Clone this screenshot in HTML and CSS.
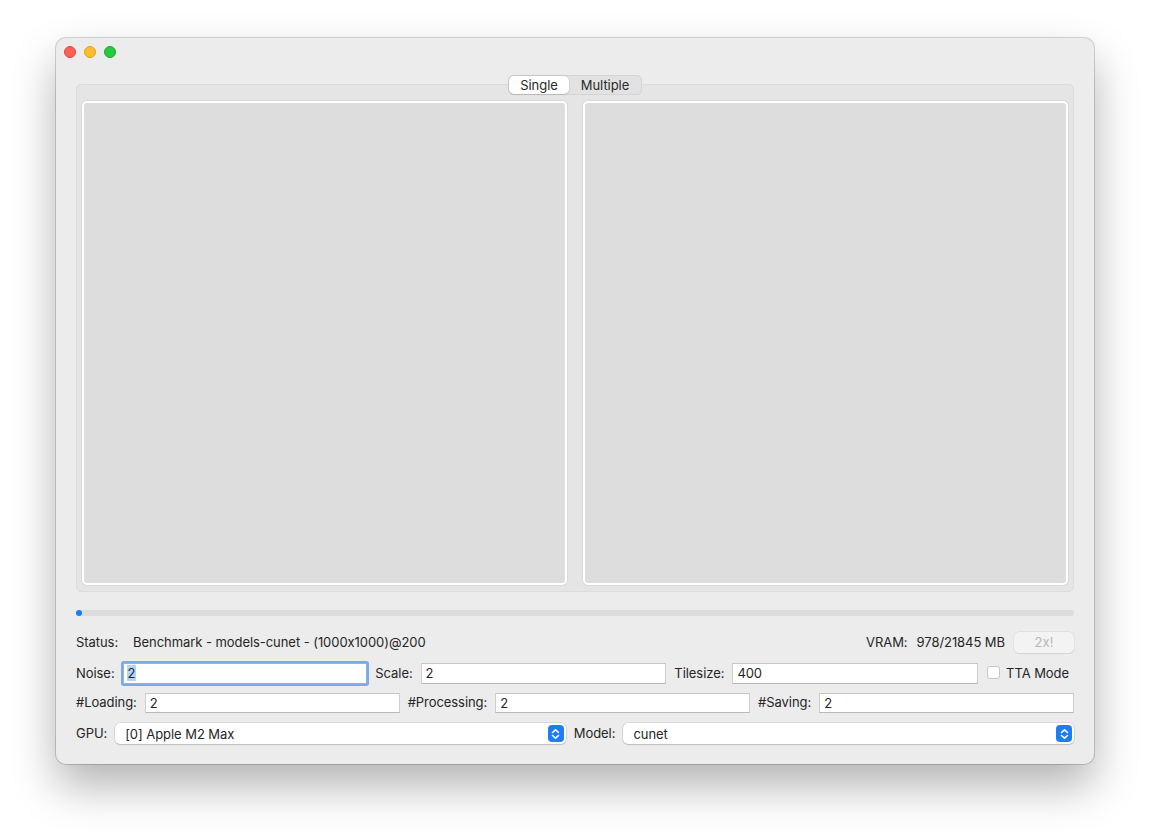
FILE: index.html
```html
<!DOCTYPE html>
<html>
<head>
<meta charset="utf-8">
<link rel="stylesheet" href="styles.css">
</head>
<body>
<div class="desk">
<div class="window">
  <div class="titlebar">
    <span class="light red"></span>
    <span class="light yellow"></span>
    <span class="light green"></span>
  </div>
  <div class="groupbox">
    <div class="tabs">
      <div class="segmented">
        <span class="seg selected">Single</span>
        <span class="seg">Multiple</span>
      </div>
    </div>
    <div class="panels">
      <div class="panel"></div>
      <div class="panel"></div>
    </div>
  </div>
  <div class="progress"><span class="progress-dot"></span></div>
  <div class="row status-row">
    <div class="status-left">
      <span class="label status-label">Status:</span>
      <span class="label">Benchmark - models-cunet - (1000x1000)@200</span>
    </div>
    <div class="status-right">
      <span class="label">VRAM:</span>
      <span class="label">978/21845 MB</span>
      <button class="btn" disabled>2x!</button>
    </div>
  </div>
  <div class="row row2">
    <span class="label">Noise:</span>
    <div class="field focused"><span class="sel-text">2</span></div>
    <span class="label">Scale:</span>
    <div class="field">2</div>
    <span class="label">Tilesize:</span>
    <div class="field">400</div>
    <span class="check"><span class="box"></span><span class="label">TTA Mode</span></span>
  </div>
  <div class="row row3">
    <span class="label">#Loading:</span>
    <div class="field">2</div>
    <span class="label">#Processing:</span>
    <div class="field">2</div>
    <span class="label">#Saving:</span>
    <div class="field">2</div>
  </div>
  <div class="row row4">
    <span class="label">GPU:</span>
    <div class="select"><span>[0] Apple M2 Max</span>
      <span class="stepper"><svg width="9" height="12" viewBox="0 0 9 12"><path d="M1.5 4.5 L4.5 1.8 L7.5 4.5 M1.5 7.5 L4.5 10.2 L7.5 7.5" fill="none" stroke="#fff" stroke-width="1.6" stroke-linecap="round" stroke-linejoin="round"/></svg></span>
    </div>
    <span class="label">Model:</span>
    <div class="select"><span>cunet</span>
      <span class="stepper"><svg width="9" height="12" viewBox="0 0 9 12"><path d="M1.5 4.5 L4.5 1.8 L7.5 4.5 M1.5 7.5 L4.5 10.2 L7.5 7.5" fill="none" stroke="#fff" stroke-width="1.6" stroke-linecap="round" stroke-linejoin="round"/></svg></span>
    </div>
  </div>
</div>
</div>
</body>
</html>
```

FILE: styles.css
```css
html, body {
  margin: 0;
  padding: 0;
  background: #ffffff;
}
body {
  font-family: Inter, "Liberation Sans", sans-serif;
  font-size: 13px;
  letter-spacing: -0.06px;
  font-feature-settings: "calt" 0;
  color: #262626;
}
.desk {
  height: 838px;
  box-sizing: border-box;
  padding: 38px 0 0 56px;
  overflow: hidden;
}
.window {
  width: 1038px;
  height: 726px;
  box-sizing: border-box;
  background: #ececec;
  border-radius: 10px;
  box-shadow: 0 0 0 1px rgba(0,0,0,0.16), 0 22px 45px rgba(0,0,0,0.30);
  padding: 0 20px 20px 20px;
  display: flex;
  flex-direction: column;
}
.titlebar {
  height: 28px;
  display: flex;
  align-items: flex-start;
  gap: 8px;
  padding-top: 8px;
  margin-left: -12px;
  box-sizing: border-box;
}
.light {
  width: 12px;
  height: 12px;
  border-radius: 50%;
  box-sizing: border-box;
}
.red { background: #fe5f57; border: 0.5px solid #e2463f; }
.yellow { background: #febc2e; border: 0.5px solid #e1a116; }
.green { background: #28c840; border: 0.5px solid #1aab29; }
.groupbox {
  margin-top: 18px;
  height: 508px;
  box-sizing: border-box;
  border: 1px solid #dcdcdc;
  border-radius: 5px;
  background: #e5e5e5;
  padding: 0 5px 6px 5px;
  display: flex;
  flex-direction: column;
}
.tabs {
  margin-top: -10px;
  display: flex;
  justify-content: center;
  position: relative;
}
.segmented {
  display: flex;
  height: 20px;
  box-sizing: border-box;
  background: #e2e2e2;
  border: 1px solid #d4d4d4;
  border-radius: 5px;
  width: 134px;
}
.seg {
  display: flex;
  align-items: center;
  justify-content: center;
  height: 18px;
  color: #2a2a2a;
  line-height: 18px;
}
.seg:first-child { width: 60px; }
.seg:last-child { flex: 1; }
.seg.selected {
  background: #ffffff;
  border-radius: 5px;
  box-shadow: 0 0 0 0.5px rgba(0,0,0,0.12), 0 1px 1px rgba(0,0,0,0.08);
}
.panels {
  margin-top: 6px;
  flex: 1;
  display: flex;
  gap: 16px;
}
.panel {
  flex: 1;
  background: #dcdddc;
  border: 2px solid #ffffff;
  border-radius: 5px;
  box-shadow: 0 0 0 1px #dadada;
}
.progress {
  margin-top: 18px;
  height: 6px;
  border-radius: 3px;
  background: #dcdcdc;
  display: flex;
}
.progress-dot {
  width: 6px;
  height: 6px;
  border-radius: 3px;
  background: #1a7cf5;
}
.row {
  display: flex;
  align-items: center;
}
.label {
  white-space: nowrap;
  line-height: 16px;
}
.row2 > .label, .row3 > .label, .row4 > .label, .check .label {
  padding-bottom: 2px;
}
.status-row {
  margin-top: 16px;
  height: 20px;
  justify-content: space-between;
}
.status-left { display: flex; gap: 15px; }
.status-right { display: flex; align-items: center; gap: 9px; }
.btn {
  width: 60px;
  height: 21px;
  border: none;
  border-radius: 5px;
  background: #f3f3f3;
  box-shadow: 0 0 0 0.5px rgba(0,0,0,0.1), 0 1px 1px rgba(0,0,0,0.05);
  color: #b8b8b8;
  font-family: Inter, "Liberation Sans", sans-serif;
  font-size: 13px;
  padding: 0;
}
.row2 { margin-top: 11px; height: 21px; gap: 8px; }
.row3 { margin-top: 9px; height: 20px; gap: 8px; }
.row4 { margin-top: 10px; height: 21px; gap: 8px; }
.field {
  flex: 1;
  height: 100%;
  box-sizing: border-box;
  background: #ffffff;
  border: 1px solid #cfcfcf;
  border-top-color: #c6c6c6;
  border-bottom-color: #b9b9b9;
  padding: 0 4px 1px 4px;
  display: flex;
  align-items: center;
  line-height: 16px;
}
.field.focused {
  border: 1px solid #8ab4ee;
  box-shadow: 0 0 0 2px #7ba9ea;
  border-radius: 1px;
  padding-left: 3px;
}
.sel-text {
  background: #b3d3fb;
  padding: 0 1px;
}
.check {
  display: flex;
  align-items: center;
  gap: 6px;
  margin-left: 1px;
  padding-right: 5px;
}
.box {
  width: 13px;
  height: 13px;
  box-sizing: border-box;
  background: #ffffff;
  border: 1px solid #c4c4c4;
  border-radius: 3px;
  margin-top: -3px;
}
.select {
  flex: 1;
  height: 100%;
  box-sizing: border-box;
  background: #ffffff;
  border-radius: 5px;
  box-shadow: 0 0 0 0.5px rgba(0,0,0,0.16), 0 1px 1.5px rgba(0,0,0,0.12);
  display: flex;
  align-items: center;
  justify-content: space-between;
  padding: 0 2px 0 10px;
}
.stepper {
  width: 16px;
  height: 17px;
  border-radius: 4px;
  background: #1f7cf4;
  display: flex;
  align-items: center;
  justify-content: center;
}
```
